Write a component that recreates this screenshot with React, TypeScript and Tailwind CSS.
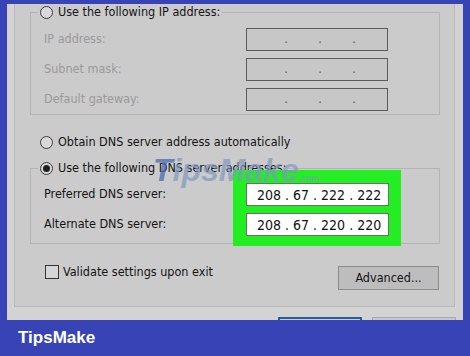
import React from "react";

// Network adapter IPv4 dialog, bottom part of the General tab.

function Radio({ checked = false }: { checked?: boolean }) {
  return (
    <span className="flex h-[13px] w-[13px] shrink-0 items-center justify-center rounded-full border border-[#3a3a3a] bg-[#d9d9d9]">
      {checked && <span className="h-[7px] w-[7px] rounded-full bg-[#1e1e1e]" />}
    </span>
  );
}

function IpBox({ parts }: { parts?: string[] }) {
  if (!parts) {
    // disabled, empty octets
    return (
      <div className="flex h-[23px] w-[142px] items-center border-[1.5px] border-[#5c5c5c] bg-[#c7c7c7] pl-[8px] text-[#555]">
        {[0, 1, 2, 3].map((i) => (
          <React.Fragment key={i}>
            {i > 0 && <span className="w-[6px] text-center leading-none">.</span>}
            <span className="w-[28px]" />
          </React.Fragment>
        ))}
      </div>
    );
  }
  return (
    <div className="flex h-[23px] w-[143px] items-center gap-[4px] border border-[#6e6e6e] bg-white pl-[10px] text-[14px] leading-none text-[#111]">
      {parts.map((p, i) => (
        <React.Fragment key={i}>
          {i > 0 && <span>.</span>}
          <span>{p}</span>
        </React.Fragment>
      ))}
    </div>
  );
}

const ipRows = ["IP address:", "Subnet mask:", "Default gateway:"];
const dnsRows = [
  { label: "Preferred DNS server:", parts: ["208", "67", "222", "222"] },
  { label: "Alternate DNS server:", parts: ["208", "67", "220", "220"] },
];

export default function App() {
  return (
    <div className="relative flex h-[356px] w-[470px] flex-col overflow-hidden bg-[#3843b5]">
      <div className="ml-[7px] mt-[4px] flex h-[316px] w-[456px] shrink-0 flex-col overflow-hidden bg-[#d3d3d3] font-['DejaVu_Sans_Condensed','DejaVu_Sans',sans-serif] text-[12.5px] text-[#141414] [font-stretch:condensed]">
        {/* tab page */}
        <div className="ml-[7px] mr-[8px] h-[303px] shrink-0 border-x border-b border-[#b9b9b9] bg-[#cbcbcb] pl-[15px] pr-[14px]">
          <fieldset className="border border-[#b4b4b4] pb-[3px]">
            <legend className="ml-[7px] flex h-[16px] items-center gap-[5px] px-[2px]">
              <Radio />
              <span>Use the following IP address:</span>
            </legend>
            <div className="mt-[8px] flex flex-col gap-[7px]">
              {ipRows.map((l) => (
                <div key={l} className="flex h-[23px] items-center">
                  <span className="w-[215px] pl-[13px] text-[#9a9a9a]">{l}</span>
                  <IpBox />
                </div>
              ))}
            </div>
          </fieldset>

          <div className="ml-[10px] mt-[19px] flex h-[16px] items-center gap-[5px]">
            <Radio />
            <span>Obtain DNS server address automatically</span>
          </div>

          <fieldset className="mt-[10px] border border-[#b4b4b4] pb-[7px]">
            <legend className="ml-[7px] flex h-[16px] items-center gap-[5px] px-[2px]">
              <Radio checked />
              <span>Use the following DNS server addresses:</span>
            </legend>
            <div className="mt-[7px] flex">
              <div className="flex w-[215px] flex-col gap-[7px] pl-[13px]">
                {dnsRows.map((r) => (
                  <div key={r.label} className="flex h-[23px] items-center">
                    {r.label}
                  </div>
                ))}
              </div>
              <div className="-mb-[10px] -ml-[13px] -mt-[13px] flex flex-col gap-[7px] bg-[#22ee22] pb-[10px] pl-[13px] pr-[12px] pt-[13px]">
                {dnsRows.map((r) => (
                  <IpBox key={r.label} parts={r.parts} />
                ))}
              </div>
            </div>
          </fieldset>

          <div className="mt-[21px] flex items-start justify-between pl-[15px] pr-[1px]">
            <div className="flex h-[14px] items-center gap-[4px]">
              <span className="h-[14px] w-[14px] border border-[#333] bg-[#d6d6d6]" />
              <span>Validate settings upon exit</span>
            </div>
            <button className="mt-[1px] h-[24px] w-[101px] border border-[#8c8c8c] bg-[#bdbdbd] text-[#141414]">
              Advanced...
            </button>
          </div>
        </div>

        <div className="mt-[10px] flex justify-end gap-[10px] pr-[7px]">
          <div className="h-[24px] w-[84px] shrink-0 border-2 border-[#2d5d8c] bg-[#b9d3ee]" />
          <div className="h-[24px] w-[84px] shrink-0 border border-[#a9a9a9] bg-[#c9c9c9]" />
        </div>
      </div>

      <div className="flex h-[36px] shrink-0 items-center pl-[18px] font-['Liberation_Sans',Arial,sans-serif] text-[17px] font-bold text-white">
        TipsMake
      </div>

      {/* watermark */}
      <div className="pointer-events-none absolute left-[153px] top-[154px] flex items-baseline font-['Liberation_Sans',Arial,sans-serif] text-[32px] font-bold italic leading-none">
        <span className="text-[#4f6fae]/80">T</span>
        <span className="text-[#7f97c2]/70">ipsMake</span>
        <span className="text-[9px] text-[#7f97c2]/70">.com</span>
      </div>
    </div>
  );
}
